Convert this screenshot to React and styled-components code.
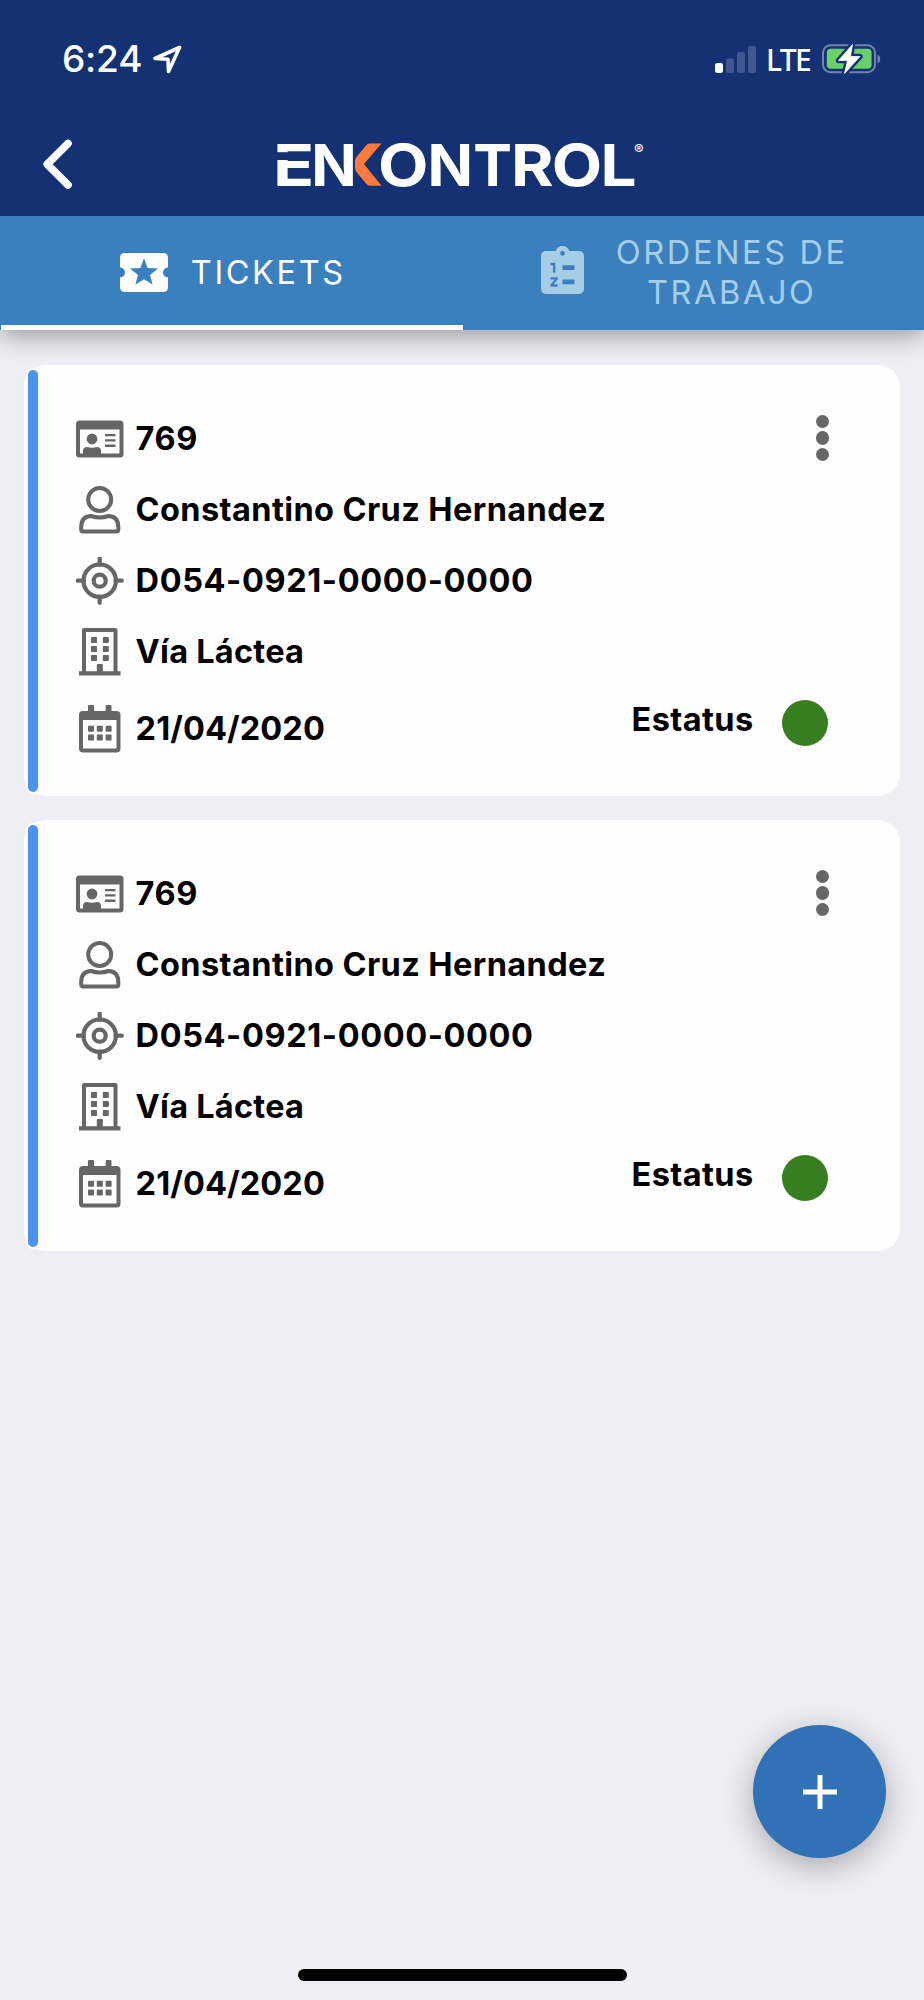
import React, { useState } from 'react';
import styled, { createGlobalStyle } from 'styled-components';

const GlobalStyle = createGlobalStyle`
  * {
    box-sizing: border-box;
  }

  body {
    margin: 0;
    background: #efeef4;
    font-family: Inter, 'Liberation Sans', sans-serif;
  }

  button {
    border: none;
    background: none;
    padding: 0;
    font-family: inherit;
    cursor: pointer;
  }

  svg {
    display: block;
    flex: none;
  }
`;

const Screen = styled.div`
  display: flex;
  flex-direction: column;
  width: 924px;
  height: 2000px;
  overflow: hidden;
  background: #efeef4;
`;

const Header = styled.header`
  position: relative;
  z-index: 1;
  height: 215.5px;
  background: #133173;
`;

const StatusBar = styled.div`
  display: flex;
  justify-content: space-between;
  align-items: center;
  height: 112px;
  padding: 6px 42px 0 62px;
  color: #fff;
`;

const StatusGroup = styled.div`
  display: flex;
  align-items: center;
`;

const Time = styled.span`
  width: 91px;
  font-size: 37px;
  font-weight: 500;
  line-height: 44px;
  letter-spacing: -0.2px;
`;

const Network = styled.span`
  width: 56px;
  margin-left: 10px;
  padding-top: 2px;
  font-family: 'Noto Sans', sans-serif;
  font-size: 30px;
  font-weight: 500;
  line-height: 36px;
  letter-spacing: -1.6px;
`;

const NavBar = styled.div`
  display: flex;
  align-items: center;
  height: 103px;
  padding-left: 40px;
`;

const BackButton = styled.button`
  width: 36px;
  margin-right: 196.5px;
`;

const Tabs = styled.nav`
  display: flex;
  height: 114.5px;
  padding-left: 1px;
  background: #3a80be;
  box-shadow: 0 6px 24px rgba(0, 0, 0, 0.36);
`;

const Tab = styled.button`
  display: flex;
  justify-content: center;
  align-items: center;
  gap: ${props => props.gap}px;
  width: 462px;
  padding: 6px 0 0 2px;
  border-bottom: 5px solid ${props => props.active ? '#fff' : 'transparent'};
  color: ${props => props.active ? '#fff' : '#a6cde6'};

  svg {
    margin-bottom: ${props => props.lift}px;
  }
`;

const TabLabel = styled.span`
  font-size: 32.5px;
  font-weight: 400;
  line-height: 40.5px;
  letter-spacing: 2.6px;
`;

const TicketList = styled.main`
  display: flex;
  flex-direction: column;
  gap: 24px;
  padding: 35px 24px 0;
`;

const Card = styled.article`
  display: flex;
  height: 431px;
  padding: 5px 0 4px 4.4px;
  border-radius: 22px;
  background: #fefefe;
`;

const Accent = styled.div`
  width: 9.8px;
  border-radius: 5px;
  background: #4a94ed;
  box-shadow: 0 0 0 2px #fff;
`;

const Details = styled.div`
  flex: 1;
  padding: 33px 0 0 37.8px;
`;

const Row = styled.div`
  display: flex;
  align-items: center;
  height: 71px;
  margin-top: ${props => props.last ? 6 : 0}px;
  color: #666;
`;

const RowText = styled.span`
  margin-left: 11.6px;
  color: #000;
  font-size: 32.5px;
  font-weight: 700;
  line-height: 40px;
  letter-spacing: ${props => props.spacing || 0.4}px;
`;

const Actions = styled.div`
  display: flex;
  flex-direction: column;
  justify-content: space-between;
  align-items: flex-end;
  padding: 45px 72px 46px 0;
`;

const MenuButton = styled.button`
  display: flex;
  flex-direction: column;
  gap: 3px;
  margin-right: -1px;
`;

const Dot = styled.span`
  width: 13.4px;
  height: 13.4px;
  border-radius: 50%;
  background: #666;
`;

const Status = styled.div`
  display: flex;
  align-items: center;
  gap: 28.5px;
`;

const StatusLabel = styled(RowText)`
  margin: -6px 0 0;
`;

const StatusDot = styled.span`
  width: 46px;
  height: 46px;
  border-radius: 50%;
  background: #367e20;
`;

const Footer = styled.footer`
  display: flex;
  flex-direction: column;
  align-items: center;
  margin-top: auto;
`;

const AddButton = styled.button`
  display: flex;
  justify-content: center;
  align-items: center;
  align-self: flex-end;
  width: 133px;
  height: 133px;
  margin: 0 38px 111px 0;
  border-radius: 50%;
  background: #3072b5;
  box-shadow: 0 8px 32px rgba(0, 0, 0, 0.3);
`;

const HomeIndicator = styled.div`
  width: 329px;
  height: 12px;
  margin-bottom: 19px;
  border-radius: 6px;
  background: #000;
`;

const LocationIcon = () => (
  <svg width="29" height="29" viewBox="0 0 29 29" fill="none" stroke="#fff" strokeWidth="3.6" strokeLinejoin="round">
    <path d="M26.5 2.5 L2 13.5 L15 14.2 L15.5 26.5 Z" />
  </svg>
);

const SignalIcon = () => (
  <svg width="41" height="27" viewBox="0 0 41 27" fill="#3f5990">
    <rect y="17" width="8" height="10" rx="2.2" fill="#fff" />
    <rect x="11" y="12.5" width="8" height="14.5" rx="2.2" />
    <rect x="22" y="6" width="8" height="21" rx="2.2" />
    <rect x="33" width="8" height="27" rx="2.2" />
  </svg>
);

const BatteryIcon = () => (
  <svg width="60" height="30" viewBox="0 0 60 30">
    <rect x="1" y="1.2" width="52" height="27" rx="7.5" fill="none" stroke="#7184ab" strokeWidth="2" />
    <path d="M55.5 10.5 a5 5 0 0 1 0 9 Z" fill="#7184ab" />
    <rect x="4.8" y="4.8" width="44.8" height="20" rx="4" fill="#69d168" />
    <path d="M30.5 0.5 L16.5 16.5 H25.5 L22.5 29.5 L38 12.5 H28.5 Z" fill="#fff" stroke="#133173" strokeWidth="5.5" strokeLinejoin="round" />
    <path d="M30.5 0.5 L16.5 16.5 H25.5 L22.5 29.5 L38 12.5 H28.5 Z" fill="#fff" stroke="#fff" strokeWidth="0.8" strokeLinejoin="round" />
  </svg>
);

const BackIcon = () => (
  <svg width="36" height="54" viewBox="0 0 36 54" fill="none" stroke="#fff" strokeWidth="7.6" strokeLinecap="round" strokeLinejoin="round">
    <path d="M28 6.5 L7.2 27.3 L28 48" />
  </svg>
);

// x offset and horizontal stretch of each letter in the wordmark
const logoLetters = [
  { char: 'E', x: -0.1, stretch: 1.17 },
  { char: 'N', x: 38.2, stretch: 1.03 },
  { char: 'O', x: 105.1, stretch: 1.13 },
  { char: 'N', x: 154.5, stretch: 1.03 },
  { char: 'T', x: 200.3, stretch: 1 },
  { char: 'R', x: 238.1, stretch: 1.12 },
  { char: 'O', x: 278.8, stretch: 1.13 },
  { char: 'L', x: 327.6, stretch: 1.1 },
];

const Logo = () => (
  <svg width="400" height="84" viewBox="0 -15 400 84" overflow="visible" fontFamily="Inter, sans-serif" fontWeight="700" fontSize="58" fill="#fff">
    {logoLetters.map(({ char, x, stretch }) => (
      <text key={x} transform={`translate(${x} 48.7) scale(${stretch} 1)`}>{char}</text>
    ))}
    <rect x="0" y="15.2" width="38" height="7.8" fill="#133173" />
    <path d="M96.5 6.5 H108.5 L91 27 L108.5 48.7 H97.5 Q95 48.7 93 46.5 L83.5 35 Q82 33 82 31 V24 Q82 22 83.5 20 L93 8.5 Q94.5 6.5 96.5 6.5 Z" fill="#ff7a3c" />
    <text x="361" y="17.5" fontSize="14.5" fontWeight="500">®</text>
  </svg>
);

const TicketIcon = () => (
  <svg width="48" height="39" viewBox="0 0 48 39" fill="currentColor" fillRule="evenodd">
    <path d="M5 0 H43 Q48 0 48 5 V14.5 A5 5 0 0 0 48 24.5 V34 Q48 39 43 39 H5 Q0 39 0 34 V24.5 A5 5 0 0 0 0 14.5 V5 Q0 0 5 0 Z M24 5.5 L20.3 15 L10 15.6 L18 22 L15.4 31.5 L24 26.2 L32.6 31.5 L30 22 L38 15.6 L27.7 15 Z" />
  </svg>
);

const ClipboardIcon = () => (
  <svg width="43" height="48" viewBox="3 1 18 20" fill="currentColor" fillRule="evenodd">
    <path d="M19 3 H14.82 C14.4 1.84 13.3 1 12 1 S9.6 1.84 9.18 3 H5 C3.9 3 3 3.9 3 5 V19 C3 20.1 3.9 21 5 21 H19 C20.1 21 21 20.1 21 19 V5 C21 3.9 20.1 3 19 3 Z M12 3 A1 1 0 1 1 12 5 A1 1 0 1 1 12 3 Z M7 8 H9 V12 H8 V9 H7 Z M10 17 V18 H7 V17.1 L8.8 15 H7 V14 H10 V14.9 L8.2 17 Z M12 9 H17 V11 H12 Z M12 15 H17 V17 H12 Z" />
  </svg>
);

const PlusIcon = () => (
  <svg width="34" height="34" viewBox="0 0 34 34" fill="none" stroke="#fff" strokeWidth="5">
    <path d="M17 0 V34 M0 17 H34" />
  </svg>
);

const IdCardIcon = () => (
  <svg width="48" height="48" viewBox="0 0 48 48" fill="currentColor" fillRule="evenodd">
    <path d="M3.5 5.5 H44 Q47.5 5.5 47.5 9 V39 Q47.5 42.5 44 42.5 H3.5 Q0 42.5 0 39 V9 Q0 5.5 3.5 5.5 Z M4 14.5 V38.5 H43.5 V14.5 Z" />
    <circle cx="16" cy="24" r="5.4" />
    <path d="M7 39 V36 Q7 32 11 32 Q16 33.5 21 32 Q25 32 25 36 V39 Z" />
    <path d="M29 19 H39.5 V21.3 H29 Z M29 24.3 H39.5 V26.6 H29 Z M29 29.6 H39.5 V31.9 H29 Z" />
  </svg>
);

const UserIcon = () => (
  <svg width="48" height="48" viewBox="0 0 48 48" fill="none" stroke="currentColor" strokeWidth="4" strokeLinejoin="round">
    <circle cx="23.7" cy="13.5" r="11.5" />
    <path d="M15 30 Q23.7 33.2 32.5 30 Q42.3 30.5 42.3 41 V43.5 Q42.3 45.5 40.3 45.5 H7.2 Q5.2 45.5 5.2 43.5 V41 Q5.2 30.5 15 30 Z" />
  </svg>
);

const CrosshairIcon = () => (
  <svg width="48" height="48" viewBox="0 0 48 48" fill="none" stroke="currentColor" strokeWidth="4.2">
    <circle cx="23.7" cy="23.7" r="16.2" />
    <circle cx="23.7" cy="23.7" r="6" />
    <path d="M23.7 1.6 V8 M23.7 39.5 V45.8 M1.6 23.7 H8 M39.5 23.7 H45.8" strokeLinecap="round" />
  </svg>
);

const BuildingIcon = () => (
  <svg width="48" height="48" viewBox="0 0 48 48" fill="currentColor" fillRule="evenodd">
    <path d="M8 0 H39.5 Q41.5 0 41.5 2 V43.3 H44.5 V47.5 H3 V43.3 H6 V2 Q6 0 8 0 Z M10 4 V43.3 H21 V37 Q21 36 22 36 H25.5 Q26.5 36 26.5 37 V43.3 H37.5 V4 Z" />
    {[9, 18, 27].map(y => (
      <g key={y}>
        <rect x="15" y={y} width="6" height="6" rx="0.8" />
        <rect x="26.8" y={y} width="6" height="6" rx="0.8" />
      </g>
    ))}
    <path d="M20.8 43.5 V37 Q20.8 36 21.8 36 H25.7 Q26.7 36 26.7 37 V43.5 Z" />
  </svg>
);

const CalendarIcon = () => (
  <svg width="48" height="48" viewBox="0 0 48 48" fill="currentColor" fillRule="evenodd">
    <path d="M7 6 H12 V1 Q12 0 13 0 H17 Q18 0 18 1 V6 H29.7 V1 Q29.7 0 30.7 0 H34.5 Q35.5 0 35.5 1 V6 H40.5 Q44.5 6 44.5 10 V43.5 Q44.5 47.5 40.5 47.5 H7 Q3 47.5 3 43.5 V10 Q3 6 7 6 Z M7 15 V43.5 H40.5 V15 Z" />
    {[20.8, 29.6].map(y => (
      <g key={y}>
        <rect x="12" y={y} width="6" height="6" rx="0.8" />
        <rect x="20.8" y={y} width="6" height="6" rx="0.8" />
        <rect x="29.6" y={y} width="6" height="6" rx="0.8" />
      </g>
    ))}
  </svg>
);

const tickets = [
  {
    id: 1,
    number: '769',
    client: 'Constantino Cruz Hernandez',
    location: 'D054-0921-0000-0000',
    building: 'Vía Láctea',
    date: '21/04/2020',
  },
  {
    id: 2,
    number: '769',
    client: 'Constantino Cruz Hernandez',
    location: 'D054-0921-0000-0000',
    building: 'Vía Láctea',
    date: '21/04/2020',
  },
];

const TicketCard = ({ ticket }) => (
  <Card>
    <Accent />
    <Details>
      <Row>
        <IdCardIcon />
        <RowText spacing={0.6}>{ticket.number}</RowText>
      </Row>
      <Row>
        <UserIcon />
        <RowText>{ticket.client}</RowText>
      </Row>
      <Row>
        <CrosshairIcon />
        <RowText spacing={0.6}>{ticket.location}</RowText>
      </Row>
      <Row>
        <BuildingIcon />
        <RowText spacing={0.25}>{ticket.building}</RowText>
      </Row>
      <Row last>
        <CalendarIcon />
        <RowText spacing={0.1}>{ticket.date}</RowText>
      </Row>
    </Details>
    <Actions>
      <MenuButton aria-label="Opciones">
        <Dot />
        <Dot />
        <Dot />
      </MenuButton>
      <Status>
        <StatusLabel>Estatus</StatusLabel>
        <StatusDot />
      </Status>
    </Actions>
  </Card>
);

const App = () => {
  const [tab, setTab] = useState('tickets');

  return (
    <>
      <GlobalStyle />
      <Screen>
        <Header>
          <StatusBar>
            <StatusGroup>
              <Time>6:24</Time>
              <LocationIcon />
            </StatusGroup>
            <StatusGroup>
              <SignalIcon />
              <Network>LTE</Network>
              <BatteryIcon />
            </StatusGroup>
          </StatusBar>
          <NavBar>
            <BackButton aria-label="Regresar">
              <BackIcon />
            </BackButton>
            <Logo />
          </NavBar>
        </Header>

        <Tabs>
          <Tab gap={23} lift={1} active={tab === 'tickets'} onClick={() => setTab('tickets')}>
            <TicketIcon />
            <TabLabel>TICKETS</TabLabel>
          </Tab>
          <Tab gap={32} lift={6} active={tab === 'ordenes'} onClick={() => setTab('ordenes')}>
            <ClipboardIcon />
            <TabLabel>
              ORDENES DE
              <br />
              TRABAJO
            </TabLabel>
          </Tab>
        </Tabs>

        <TicketList>
          {tickets.map(ticket => (
            <TicketCard key={ticket.id} ticket={ticket} />
          ))}
        </TicketList>

        <Footer>
          <AddButton aria-label="Agregar">
            <PlusIcon />
          </AddButton>
          <HomeIndicator />
        </Footer>
      </Screen>
    </>
  );
};

export default App;
